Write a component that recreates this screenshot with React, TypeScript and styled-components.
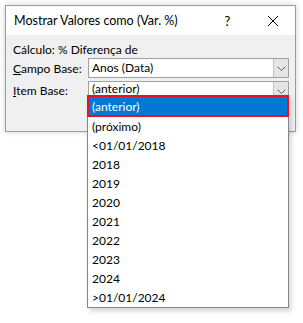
import React from "react";
import styled, { createGlobalStyle } from "styled-components";

const GlobalStyle = createGlobalStyle`
  html, body {
    margin: 0;
    padding: 0;
    background: #ffffff;
  }
  body {
    font-family: Lato, "Noto Sans", sans-serif;
    font-size: 12px;
    color: #000;
  }
`;

const Page = styled.div`
  position: relative;
  width: 303px;
  height: 323px;
  padding: 5px 0 0 5px;
  box-sizing: border-box;
  overflow: hidden;
`;

const Window = styled.div`
  width: 291px;
  height: 127px;
  box-sizing: border-box;
  border: 1px solid #9a9a9a;
  background: #f0f0f0;
  box-shadow: 0 0 6px rgba(0, 0, 0, 0.18);
  display: flex;
  flex-direction: column;
`;

const TitleBar = styled.div`
  height: 29px;
  background: #ffffff;
  display: flex;
  align-items: center;
  padding-left: 8px;
  font-size: 12.5px;
`;

const Title = styled.div`
  flex: 1;
  white-space: nowrap;
`;

const TitleButton = styled.div`
  width: 45px;
  height: 29px;
  display: flex;
  align-items: center;
  justify-content: center;
  font-size: 13px;
`;

const Body = styled.div`
  padding: 7px 6px 0 7px;
  display: flex;
  flex-direction: column;
`;

const Caption = styled.div`
  height: 16px;
  line-height: 16px;
  white-space: nowrap;
`;

const Row = styled.div<{ $top: number }>`
  display: flex;
  align-items: center;
  height: 20px;
  margin-top: ${({ $top }) => $top}px;
`;

const Label = styled.div<{ $shift?: number }>`
  width: 75px;
  white-space: nowrap;
  margin-top: ${({ $shift }) => $shift ?? 0}px;
`;

const Combo = styled.div<{ $open?: boolean }>`
  width: 201px;
  height: 20px;
  box-sizing: border-box;
  border: 1px solid #a0a0a0;
  background: #ffffff;
  display: flex;
  align-items: ${({ $open }) => ($open ? "flex-start" : "center")};
`;

const ComboText = styled.div<{ $open?: boolean }>`
  flex: 1;
  padding-left: 3px;
  white-space: nowrap;
  line-height: ${({ $open }) => ($open ? "13px" : "16px")};
`;

const ComboButton = styled.div`
  width: 15px;
  height: 18px;
  box-sizing: border-box;
  background: #e5e5e5;
  border-left: 1px solid #c4c4c4;
  display: flex;
  align-items: center;
  justify-content: center;
`;

const List = styled.div`
  position: absolute;
  left: 87px;
  top: 95px;
  width: 202px;
  box-sizing: border-box;
  border: 1px solid #828790;
  border-top: none;
  background: #ffffff;
  box-shadow: 2px 3px 5px rgba(0, 0, 0, 0.18);
`;

const Item = styled.div<{ $selected?: boolean }>`
  height: ${({ $selected }) => ($selected ? 22 : 19)}px;
  box-sizing: border-box;
  display: flex;
  align-items: center;
  padding-left: ${({ $selected }) => ($selected ? 3 : 4)}px;
  background: ${({ $selected }) => ($selected ? "#0078d7" : "#ffffff")};
  color: ${({ $selected }) => ($selected ? "#ffffff" : "#000000")};
  border: ${({ $selected }) => ($selected ? "2px solid #e81123" : "none")};
  margin: ${({ $selected }) => ($selected ? "0 -1px 0 -1px" : "0")};
  white-space: nowrap;
`;

const Chevron = () => (
  <svg width="9" height="5" viewBox="0 0 9 5">
    <path d="M0.5 0.5 L4.5 4.5 L8.5 0.5" fill="none" stroke="#606060" strokeWidth="1" />
  </svg>
);

const CloseIcon = () => (
  <svg width="10" height="10" viewBox="0 0 10 10">
    <path d="M0 0 L10 10 M10 0 L0 10" stroke="#000" strokeWidth="1" />
  </svg>
);

const items = [
  "(próximo)",
  "<01/01/2018",
  "2018",
  "2019",
  "2020",
  "2021",
  "2022",
  "2023",
  "2024",
  ">01/01/2024",
];

export default function App() {
  return (
    <Page>
      <GlobalStyle />
      <Window>
        <TitleBar>
          <Title>Mostrar Valores como (Var. %)</Title>
          <TitleButton>?</TitleButton>
          <TitleButton>
            <CloseIcon />
          </TitleButton>
        </TitleBar>
        <Body>
          <Caption>Cálculo: % Diferença de</Caption>
          <Row $top={0}>
            <Label>
              <u>C</u>ampo Base:
            </Label>
            <Combo>
              <ComboText>Anos (Data)</ComboText>
              <ComboButton>
                <Chevron />
              </ComboButton>
            </Combo>
          </Row>
          <Row $top={3}>
            <Label $shift={-2}>
              <u>I</u>tem Base:
            </Label>
            <Combo $open>
              <ComboText $open>(anterior)</ComboText>
              <ComboButton>
                <Chevron />
              </ComboButton>
            </Combo>
          </Row>
        </Body>
      </Window>
      <List>
        <Item $selected>(anterior)</Item>
        {items.map((it) => (
          <Item key={it}>{it}</Item>
        ))}
      </List>
    </Page>
  );
}
